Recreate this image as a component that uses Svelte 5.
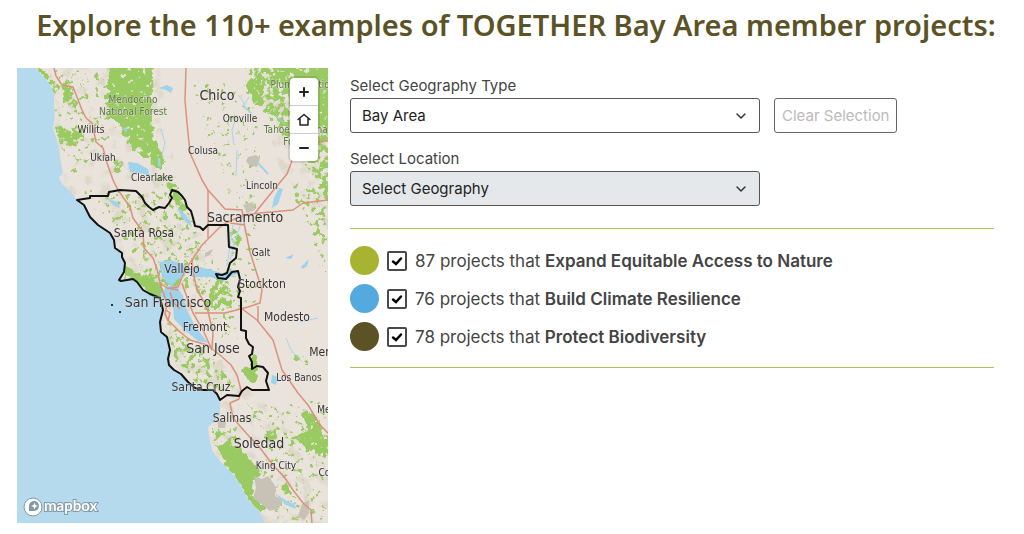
<script lang="ts">
  type Place = { name: string; x: number; y: number; size: string };

  const places: Place[] = [
    { name: "Chico", x: 217, y: 100, size: "large" },
    { name: "Oroville", x: 240, y: 122, size: "small" },
    { name: "Willits", x: 91, y: 133, size: "small" },
    { name: "Ukiah", x: 103, y: 161, size: "small" },
    { name: "Colusa", x: 203, y: 154, size: "small" },
    { name: "Clearlake", x: 152, y: 181, size: "small" },
    { name: "Lincoln", x: 262, y: 189, size: "small" },
    { name: "Sacramento", x: 245, y: 222, size: "large" },
    { name: "Santa Rosa", x: 144, y: 237, size: "medium" },
    { name: "Galt", x: 261, y: 256, size: "small" },
    { name: "Vallejo", x: 182, y: 273, size: "medium" },
    { name: "Stockton", x: 262, y: 288, size: "medium" },
    { name: "San Francisco", x: 168, y: 307, size: "large" },
    { name: "Modesto", x: 287, y: 321, size: "medium" },
    { name: "Fremont", x: 205, y: 331, size: "medium" },
    { name: "San Jose", x: 213, y: 353, size: "large" },
    { name: "Merced", x: 329, y: 356, size: "medium" },
    { name: "Los Banos", x: 299, y: 381, size: "small" },
    { name: "Santa Cruz", x: 201, y: 391, size: "medium" },
    { name: "Mendota", x: 337, y: 413, size: "small" },
    { name: "Salinas", x: 232, y: 422, size: "medium" },
    { name: "Soledad", x: 259, y: 448, size: "large" },
    { name: "King City", x: 276, y: 469, size: "small" },
    { name: "Coalinga", x: 338, y: 476, size: "small" },
    { name: "Mendocino", x: 133, y: 103, size: "forest" },
    { name: "National Forest", x: 133, y: 115, size: "forest" },
    { name: "Plumas National", x: 307, y: 88, size: "forest" },
    { name: "Forest", x: 305, y: 99, size: "forest" },
    { name: "Tahoe National", x: 297, y: 133, size: "forest" },
    { name: "Forest", x: 297, y: 145, size: "forest" },
  ];

  const coast =
    "M36 68L40 73 45 78 50 85 54 93 54 104 55 115 53 128 57 140 59 150 61 163 63 173 59 178 62 184 70 191 77 200 84 205 90 217 98 225 110 233 114 240 115 248 122 253 125 263 124 272 121 281 133 279 143 290 150 294 160 298 163 310 160 322 161 332 167 337 170 350 169 365 174 370 181 374 188 382 195 388 203 390 213 390 220 400 220 415 214 422 208 427 209 436 212 450 220 461 227 468 235 476 241 486 247 498 254 506 260 512 265 524";

  const bayArea =
    "M77 200L90 198 90 196 108 196 109 192 120 190 136 191 142 197 145 203 149 207 153 210 159 207 165 208 169 203 172 198 170 195 172 190 178 192 182 196 185 200 187 207 191 211 193 218 195 226 200 227 203 230 208 225 228 225 229 247 237 249 236 258 230 263 227 273 222 275 216 274 218 278 226 279 232 272 238 271 240 279 238 287 240 291 238 297 241 298 241 330 246 331 246 338 249 344 253 347 252 354 249 356 252 362 252 369 257 366 263 367 268 373 266 381 269 390 252 390 247 387 242 391 239 396 227 395 220 400 217 394 213 390 203 390 195 388 188 382 181 374 174 370 169 365 168 359 170 350 167 337 161 332 160 322 163 310 160 298 150 294 143 290 137 282 133 279 121 281 119 280 124 272 125 263 122 257 122 253 115 248 114 240 110 233 98 225 90 217 84 205Z";

  const roads = [
    "M54 68L56 76 62 85 73 87 77 97 82 110 86 118 92 123 96 142 103 148 107 163 113 180 118 190 130 207 133 218 143 232 144 248 153 258 157 269 160 283 163 292 167 304 165 314 168 320 180 332 190 340 207 345 220 355 231 365 237 375 241 390 239 399 230 403 233 418 247 434 260 448 273 465 285 478 293 490 303 503 311 510 312 524",
    "M186 68L185 100 187 123 190 153 202 180 208 190 225 209 242 210 245 228 250 252 262 290 260 303 248 307 225 313 195 313",
    "M241 308L257 320 273 340 282 370 298 393 308 405 320 425 329 434",
    "M170 288L178 287 185 270 192 260 202 245 220 227 226 223 243 215 260 213 293 210 303 203 328 200",
    "M208 190L208 238M255 213L272 192 287 174 293 158M245 225L230 223",
    "M192 258L193 272 197 290 207 307 213 333 212 348M182 283L184 289 193 313 203 330 212 350",
    "M160 283L167 288 178 290M258 306L258 322M300 138L310 142 328 141",
    "M166 310L170 313 168 321 165 314M170 292L173 302 180 309",
  ];

  let categories = $state([
    { count: 87, name: "Expand Equitable Access to Nature", color: "#a8b332", on: true },
    { count: 76, name: "Build Climate Resilience", color: "#54a9de", on: true },
    { count: 78, name: "Protect Biodiversity", color: "#5b5326", on: true },
  ]);
  let geographyType = $state("Bay Area");
</script>

<main>
  <h1>Explore the 110+ examples of TOGETHER Bay Area member projects:</h1>

  <div class="layout">
    <div class="map">
      <svg class="canvas" viewBox="17 68 311 455" role="img" aria-label="Map of Northern California">
        <defs>
          <clipPath id="land"><path d="{coast}H328V68Z" /></clipPath>
          <!-- painted opacity sets how dense the patches come out -->
          <filter id="patches" filterUnits="userSpaceOnUse" x="17" y="68" width="311" height="455">
            <feGaussianBlur in="SourceGraphic" stdDeviation="2" result="density" />
            <feTurbulence type="fractalNoise" baseFrequency="0.19" numOctaves="4" seed="7" result="noise" />
            <feComposite in="noise" in2="density" operator="arithmetic" k2="1" k3="1" k4="-1" />
            <feComponentTransfer result="mask"><feFuncA type="linear" slope="12" /></feComponentTransfer>
            <feFlood flood-color="#9aca62" />
            <feComposite in2="mask" operator="in" />
          </filter>
          <filter id="hills" filterUnits="userSpaceOnUse" x="17" y="68" width="311" height="455">
            <feTurbulence type="fractalNoise" baseFrequency="0.08" numOctaves="4" seed="3" result="noise" />
            <feComposite in="noise" in2="SourceGraphic" operator="arithmetic" k2="1" k3="1" k4="-1" />
            <feComponentTransfer result="mask"><feFuncA type="linear" slope="5" /></feComponentTransfer>
            <feFlood flood-color="#d9d3c2" />
            <feComposite in2="mask" operator="in" />
          </filter>
        </defs>

        <rect x="17" y="68" width="311" height="455" fill="#b6daed" />
        <path d="{coast}H328V68Z" fill="#e9e3dc" />

        <g clip-path="url(#land)">
          <g filter="url(#hills)" opacity="0.7">
            <path d="M36 68H160L180 200 210 240 195 330 260 400 328 440V524H220L170 400 60 180Z" opacity="0.48" />
            <path d="M250 68H328V230L280 170Z" opacity="0.5" />
          </g>
          <g filter="url(#patches)">
            <path d="M36 68H110L118 140 70 180Z" opacity="0.37" />
            <path d="M53 130L75 130 88 138 60 145Z" opacity="0.62" />
            <path d="M36 68L42 68 58 90 54 94Z" opacity="0.6" />
            <path d="M60 84H72L76 110 66 102Z" opacity="0.52" />
            <path d="M109 64H155L153 100 154 133 166 163 160 172 143 158 127 145 119 127 107 112Z" opacity="0.74" />
            <path d="M110 157L124 160 121 176 113 172Z" opacity="0.65" />
            <path d="M80 190H180L230 290 160 300 125 250Z" opacity="0.4" />
            <path d="M150 172L172 175 182 192 191 225 180 212 170 190 155 184Z" opacity="0.57" />
            <path d="M124 262L138 274 150 276 162 288 158 299 140 288 132 279 122 280Z" opacity="0.85" />
            <path d="M160 265L175 260 180 285 165 288Z" opacity="0.48" />
            <path d="M165 318L205 348 240 385 220 398 185 376 168 350Z" opacity="0.48" />
            <path d="M196 290H232L238 340 215 338Z" opacity="0.38" />
            <path d="M252 352L258 357 257 384 248 380 240 370 250 366Z" opacity="0.95" />
            <path d="M228 229L240 228 238 248 230 244Z" opacity="0.56" />
            <path d="M245 64H332V210L312 175 290 145 268 118 248 96Z" opacity="0.57" />
            <path d="M270 64H332V140L300 110Z" opacity="0.36" />
            <path d="M286 180L328 190V290L310 240Z" opacity="0.44" />
            <path d="M186 80H262V310H200L240 230Z" opacity="0.33" />
            <path d="M285 348L306 355 312 368 293 362Z" opacity="0.54" />
            <path d="M208 425H238L244 452 215 450Z" opacity="0.49" />
            <path d="M217 447L237 446 248 457 264 474 253 482 253 498 270 508 260 512 248 499 240 484 228 469Z" opacity="0.95" />
            <path d="M265 430L276 430 274 443 265 438Z" opacity="0.6" />
            <path d="M302 410L312 412 330 442V460L305 446 290 438 308 432Z" opacity="0.65" />
            <path d="M235 400L328 400V524H270L260 440Z" opacity="0.36" />
            <path d="M279 482L288 488 290 494 282 491Z" opacity="0.65" />
          </g>

          <g fill="#c8c1b6">
            <path d="M254 476L262 479 268 476 276 487 275 496 283 500 279 508 270 511 260 503 253 498 256 488Z" />
            <path d="M302 504L309 500 309 513 304 520 298 516Z" />
            <path d="M218 421L226 422 225 428 218 428ZM205 253L213 249 210 255 205 257Z" />
            <path d="M248 157L256 155 260 158 257 167 249 165 246 161Z" />
            <path d="M243 205L253 202 255 210 247 213Z" />
          </g>

          <g fill="#9fd2ec">
            <path d="M128 162L137 163 148 169 150 177 144 174 138 173 130 172Z" />
            <path d="M159 88L167 85 173 88 171 93 166 90ZM123 128L128 127 126 133ZM158 158L160 158 161 167 158 166Z" />
            <path d="M178 207L182 211 190 221 192 227 187 223 181 217Z" />
            <path d="M108 199L118 202 120 208 113 205Z" />
            <path d="M279 188L283 189 278 204 272 208 274 198Z" />
            <path d="M285 258L294 254 291 259ZM301 267L309 259 307 266 303 269Z" />
            <path d="M272 375L278 377 276 385 271 383ZM281 498L295 505 296 509 284 504Z" />
            <path d="M160 262L170 260 180 263 187 267 185 276 177 280 172 286 167 283 162 277Z" />
            <path d="M187 268L200 267 215 271 224 274 232 270 240 273 232 276 224 281 210 277 192 277Z" />
            <path d="M167 286L177 286 183 296 187 310 195 326 208 343 198 341 187 332 174 319 173 306 163 299 160 294Z" />
          </g>

          <g fill="none" stroke="#a3d4ec">
            <path d="M238 95L243 101 245 109 252 113M249 97L244 105 252 116M237 115L232 130 234 145" />
            <path d="M161 129L165 143 162 155M237 150L236 176M233 225L227 266M242 220L235 240 230 260" />
            <path d="M286 338L291 350 301 361M300 322L318 318M275 115L286 125" />
            <path d="M278 496L290 505 296 503M258 163L268 174" stroke-width="2" />
          </g>

          <g class="roads">
            {#each roads as d}
              <path {d} />
            {/each}
          </g>
        </g>

        <path class="region" d={bayArea} />
        <path d="M111 305h2M119 312h2" stroke="#24323a" stroke-width="2" />

        {#each places as place}
          <text class={place.size} x={place.x} y={place.y}>{place.name}</text>
        {/each}

        <g class="logo">
          <circle cx="33" cy="507" r="9" fill="#fff" stroke="#7f98a6" />
          <path d="M29 511V506A5 5 0 1 1 34 511Z" fill="#7d99a8" />
          <path d="M34.500 502.500L35.500 505 38 506 35.500 507 34.500 509.500 33.500 507 31 506 33.500 505Z" fill="#fff" />
          <text x="44" y="511">mapbox</text>
        </g>
      </svg>

      <div class="zoom">
        <button type="button" aria-label="Zoom in">
          <svg viewBox="0 0 16 16"><path d="M8 4V12M4 8H12" /></svg>
        </button>
        <button type="button" aria-label="Reset view">
          <svg viewBox="0 0 16 16"><path class="thin" d="M2 7.500L8 2.500L14 7.500M4 6.500V13H12V6.500" /></svg>
        </button>
        <button type="button" aria-label="Zoom out">
          <svg viewBox="0 0 16 16"><path d="M4 8H12" /></svg>
        </button>
      </div>
    </div>

    <div class="panel">
      <form>
        <label for="type">Select Geography Type</label>
        <div class="select">
          <select id="type" bind:value={geographyType}>
            <option>Bay Area</option>
            <option>County</option>
          </select>
          <svg viewBox="0 0 12 12"><path d="M2 4L6 8L10 4" /></svg>
        </div>
        <button type="button" class="clear" disabled>Clear Selection</button>
        <label for="location" class="next">Select Location</label>
        <div class="select">
          <select id="location" disabled>
            <option>Select Geography</option>
          </select>
          <svg viewBox="0 0 12 12"><path d="M2 4L6 8L10 4" /></svg>
        </div>
      </form>

      <ul>
        {#each categories as category}
          <li>
            <span class="dot" style="background: {category.color}"></span>
            <label>
              <input type="checkbox" bind:checked={category.on} />
              <span>{category.count} projects that <strong>{category.name}</strong></span>
            </label>
          </li>
        {/each}
      </ul>
    </div>
  </div>
</main>

<style>
  :global(body) {
    margin: 0;
    background: #fff;
  }
  main {
    padding: 4px 0 11px;
    color: #444;
    font-family: Inter, sans-serif;
    font-size: 15px;
  }
  h1 {
    margin: 0 0 22px;
    padding-left: 8px;
    color: #5b5326;
    font: 600 29px/42px "Noto Sans", sans-serif;
    text-align: center;
  }
  .layout {
    display: grid;
    grid-template-columns: minmax(0, 311fr) minmax(0, 644fr);
    gap: 22px;
    align-items: start;
    padding: 0 30px 0 17px;
  }
  .map {
    position: relative;
  }
  .canvas {
    display: block;
    width: 100%;
  }
  .canvas text {
    font-family: "DejaVu Sans Condensed", "DejaVu Sans", sans-serif;
    text-anchor: middle;
    fill: #333;
    stroke: rgba(240, 236, 230, 0.5);
    stroke-width: 1px;
    paint-order: stroke;
  }
  .canvas .large {
    font-size: 14px;
  }
  .canvas .medium {
    font-size: 12px;
  }
  .canvas .small {
    font-size: 10px;
  }
  .canvas .forest {
    font-size: 10px;
    fill: #5c7847;
  }
  .canvas .logo text {
    font: 700 15px Lato, sans-serif;
    text-anchor: start;
    fill: #fff;
    stroke: #8299a7;
    stroke-width: 2px;
  }
  .roads {
    fill: none;
    stroke: #dc917b;
    stroke-width: 1.5px;
    stroke-linejoin: round;
  }
  .region {
    fill: none;
    stroke: #111;
    stroke-width: 2px;
    stroke-linejoin: round;
  }
  .zoom {
    position: absolute;
    top: 10px;
    right: 10px;
    width: 28px;
    overflow: hidden;
    border-radius: 4px;
    background: #fff;
    box-shadow: 0 0 0 2px rgba(0, 0, 0, 0.1);
  }
  .zoom button {
    display: grid;
    place-items: center;
    width: 28px;
    height: 27px;
    padding: 0;
    border: 0;
    background: none;
  }
  .zoom button + button {
    height: 28px;
    border-top: 1px solid #ccc;
  }
  .zoom svg {
    width: 16px;
    fill: none;
    stroke: #222;
    stroke-width: 2px;
    stroke-linecap: round;
    stroke-linejoin: round;
  }
  .zoom .thin {
    stroke-width: 1.5px;
  }
  .panel {
    padding-top: 6px;
  }
  form {
    display: grid;
    grid-template-columns: minmax(0, 410fr) minmax(0, 220fr);
    column-gap: 14px;
    padding-bottom: 22px;
    border-bottom: 1px solid #b5bf5a;
  }
  form label {
    grid-column: 1 / -1;
    line-height: 24px;
  }
  .next {
    margin-top: 14px;
  }
  .select {
    position: relative;
  }
  select {
    display: block;
    width: 100%;
    height: 35px;
    padding: 0 11px;
    appearance: none;
    border: 1px solid #555;
    border-radius: 3px;
    background: #fff;
    color: #222;
    font: inherit;
    opacity: 1;
  }
  select:disabled {
    background: #e4e8eb;
  }
  .select svg {
    position: absolute;
    top: 12px;
    right: 13px;
    width: 12px;
    fill: none;
    stroke: #333;
    stroke-width: 1.5px;
    stroke-linecap: round;
    stroke-linejoin: round;
    pointer-events: none;
  }
  .clear {
    justify-self: start;
    height: 35px;
    padding: 0 7px;
    border: 1px solid #666;
    border-radius: 3px;
    background: #fff;
    color: #bbb;
    font: inherit;
    white-space: nowrap;
  }
  ul {
    display: grid;
    gap: 9px;
    margin: 0;
    padding: 17px 0 16px;
    border-bottom: 1px solid #b5bf5a;
    list-style: none;
  }
  li,
  li label {
    display: flex;
    align-items: center;
    gap: 8px;
  }
  .dot {
    width: 29px;
    height: 29px;
    border-radius: 50%;
  }
  li label {
    font-size: 17px;
  }
  strong {
    font-weight: 600;
  }
  input {
    width: 20px;
    height: 20px;
    margin: 0;
    appearance: none;
    border: 2px solid #4a4a4a;
    border-radius: 2px;
    background: #fff;
  }
  input:checked {
    background: url("data:image/svg+xml,%3Csvg xmlns='http://www.w3.org/2000/svg' viewBox='0 0 16 16'%3E%3Cpath d='M4 8.500L7 11L12 5.500' fill='none' stroke='%23000' stroke-width='2.500' stroke-linecap='round'/%3E%3C/svg%3E");
  }
</style>
